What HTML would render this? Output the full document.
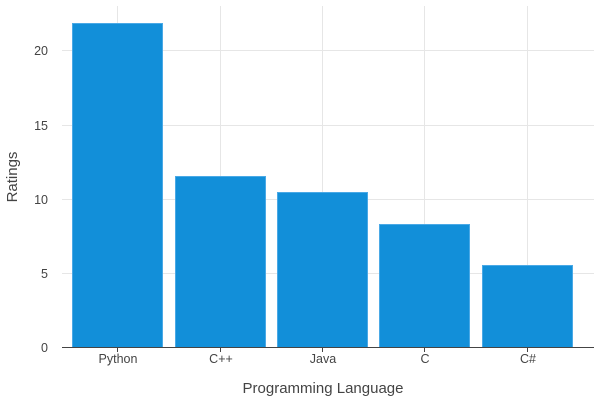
<!DOCTYPE html>
<html><head><style>body{margin:0;background:#fff}</style></head><body>
<svg width="600" height="400" xmlns="http://www.w3.org/2000/svg" font-family="Liberation Sans, sans-serif">
<g stroke="#e6e6e6" stroke-width="1">
<line x1="62" x2="594" y1="50.5" y2="50.5"/><line x1="62" x2="594" y1="125.5" y2="125.5"/>
<line x1="62" x2="594" y1="199.5" y2="199.5"/><line x1="62" x2="594" y1="273.5" y2="273.5"/>
<line x1="117.5" x2="117.5" y1="6" y2="347"/><line x1="220.5" x2="220.5" y1="6" y2="347"/>
<line x1="322.5" x2="322.5" y1="6" y2="347"/><line x1="424.5" x2="424.5" y1="6" y2="347"/>
<line x1="527.5" x2="527.5" y1="6" y2="347"/>
</g>
<g fill="#128fd9" stroke="#4aa9e6" stroke-width="1">
<rect x="72.5" y="23.5" width="90" height="324"/>
<rect x="175.5" y="176.5" width="90" height="171"/>
<rect x="277.5" y="192.5" width="90" height="155"/>
<rect x="379.5" y="224.5" width="90" height="123"/>
<rect x="482.5" y="265.5" width="90" height="82"/>
</g>
<line x1="62" x2="594" y1="347.5" y2="347.5" stroke="#444" stroke-width="1"/>
<g stroke="#444"><line x1="117.5" x2="117.5" y1="347" y2="352"/><line x1="220.5" x2="220.5" y1="347" y2="352"/><line x1="322.5" x2="322.5" y1="347" y2="352"/><line x1="424.5" x2="424.5" y1="347" y2="352"/><line x1="527.5" x2="527.5" y1="347" y2="352"/></g>
<g fill="#444" font-size="12.5" text-anchor="end">
<text x="48" y="55">20</text><text x="48" y="130">15</text><text x="48" y="204">10</text><text x="48" y="278">5</text><text x="48" y="352">0</text>
</g>
<g fill="#444" font-size="12.5" text-anchor="middle">
<text x="118" y="363">Python</text><text x="221" y="363">C++</text><text x="323" y="363">Java</text><text x="425" y="363">C</text><text x="528" y="363">C#</text>
<text x="323" y="393" font-size="15">Programming Language</text>
<text transform="translate(17,177) rotate(-90)" font-size="15">Ratings</text>
</g>
</svg>
</body></html>
